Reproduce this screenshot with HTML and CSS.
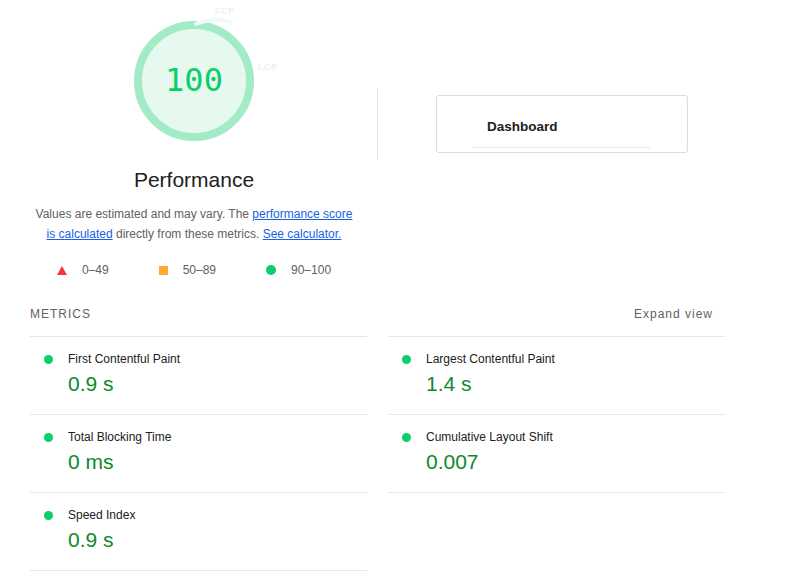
FILE: index.html
```html
<!DOCTYPE html>
<html>
<head>
<meta charset="utf-8">
<link rel="stylesheet" href="styles.css">
</head>
<body>
<div class="page">
  <section class="top">
    <div class="score-col">
      <div class="gauge-wrap">
        <div class="gauge">100</div>
        <svg class="gauge-arc" width="40" height="14" viewBox="0 0 40 14"><path d="M2 10 Q18 3 36 8" fill="none" stroke="#f2faf6" stroke-width="4" stroke-linecap="round"/></svg>
        <span class="ghost ghost-fcp">FCP</span>
        <span class="ghost ghost-lcp">LCP</span>
      </div>
      <h1 class="score-title">Performance</h1>
      <p class="desc">Values are estimated and may vary. The <a href="#">performance score is calculated</a> directly from these metrics. <a href="#">See calculator.</a></p>
      <div class="legend">
        <span class="legend-item"><span class="ico tri"></span>0–49</span>
        <span class="legend-item"><span class="ico sq"></span>50–89</span>
        <span class="legend-item"><span class="ico dot"></span>90–100</span>
      </div>
    </div>
    <div class="divider"></div>
    <div class="card">
      <div class="card-title">Dashboard</div>
      <div class="card-line"></div>
    </div>
  </section>

  <section class="metrics">
    <div class="metrics-head">
      <span class="metrics-label">METRICS</span>
      <span class="metrics-toggle">Expand view</span>
    </div>
    <div class="metrics-grid">
      <div class="metric"><span class="mdot"></span><div><div class="mtitle">First Contentful Paint</div><div class="mval">0.9 s</div></div></div>
      <div class="metric"><span class="mdot"></span><div><div class="mtitle">Largest Contentful Paint</div><div class="mval">1.4 s</div></div></div>
      <div class="metric"><span class="mdot"></span><div><div class="mtitle">Total Blocking Time</div><div class="mval">0 ms</div></div></div>
      <div class="metric"><span class="mdot"></span><div><div class="mtitle">Cumulative Layout Shift</div><div class="mval">0.007</div></div></div>
      <div class="metric"><span class="mdot"></span><div><div class="mtitle">Speed Index</div><div class="mval">0.9 s</div></div></div>
    </div>
  </section>
</div>
</body>
</html>
```

FILE: styles.css
```css
* { box-sizing: border-box; }
html, body { margin: 0; padding: 0; background: #fff; }
body {
  font-family: "Liberation Sans", Arial, sans-serif;
  color: #212121;
  width: 796px;
  height: 571px;
  overflow: hidden;
}
.page { padding: 0 30px; }

.top { display: flex; align-items: flex-start; }
.score-col {
  width: 328px;
  display: flex;
  flex-direction: column;
  align-items: center;
}
.gauge-wrap {
  position: relative;
  width: 120px;
  height: 120px;
  margin-top: 21px;
}
.gauge {
  width: 120px;
  height: 120px;
  border-radius: 50%;
  border: 8px solid #a2ebc6;
  background: #e6f9ef;
  display: flex;
  align-items: center;
  justify-content: center;
  font-family: "DejaVu Sans Mono", monospace;
  font-size: 32px;
  color: #0cce6b;
  padding-bottom: 3px;
}
.gauge-arc { position: absolute; left: 60px; top: -7px; }
.ghost {
  position: absolute;
  font-size: 9px;
  font-weight: bold;
  color: #eeeeee;
  letter-spacing: 0.5px;
}
.ghost-fcp { left: 81px; top: -15px; }
.ghost-lcp { left: 124px; top: 41px; }

.score-title {
  margin: 27px 0 0;
  font-size: 21px;
  font-weight: normal;
  line-height: 24px;
  color: #212121;
}
.desc {
  margin: 12px 0 0;
  width: 322px;
  font-size: 12px;
  line-height: 20px;
  text-align: center;
  color: #616161;
}
.desc a { color: #1a5fe8; text-decoration: underline; }

.legend {
  margin-top: 16px;
  display: flex;
  gap: 50px;
  font-size: 12px;
  line-height: 20px;
  color: #616161;
}
.legend-item { display: flex; align-items: center; gap: 15px; }
.ico { display: inline-block; }
.tri {
  width: 0; height: 0;
  border-left: 5px solid transparent;
  border-right: 5px solid transparent;
  border-bottom: 9px solid #ff3333;
}
.sq { width: 9px; height: 9px; background: #ffaa33; }
.dot { width: 10px; height: 10px; border-radius: 50%; background: #0cce6b; }

.divider {
  width: 1px;
  height: 72px;
  background: #e0e0e0;
  margin: 88px 0 0 19px;
}
.card {
  margin: 95px 0 0 58px;
  width: 252px;
  height: 58px;
  border: 1px solid #dcdcdc;
  border-radius: 3px;
  padding: 22px 0 0 50px;
}
.card-title {
  font-size: 13.5px;
  font-weight: bold;
  line-height: 17px;
  color: #202020;
}
.card-line {
  margin-top: 12px;
  width: 177px;
  height: 1px;
  background: #e6e6e6;
  position: relative;
  left: -14px;
}

.metrics { margin-top: 24px; width: 695px; }
.metrics-head {
  display: flex;
  justify-content: space-between;
  padding-right: 12px;
  font-size: 12px;
  line-height: 20px;
  letter-spacing: 1px;
  color: #616161;
  margin-bottom: 12px;
}
.metrics-grid {
  display: grid;
  grid-template-columns: 337px 337px;
  column-gap: 21px;
}
.metric {
  display: flex;
  gap: 15px;
  padding: 12px 0 0 14px;
  height: 78px;
  border-bottom: 1px solid #e6e6e6;
}
.metric:nth-child(-n+2) { border-top: 1px solid #e6e6e6; height: 79px; }
.mdot {
  flex: none;
  width: 9px;
  height: 9px;
  border-radius: 50%;
  background: #0cce6b;
  margin-top: 6px;
}
.mtitle { font-size: 12px; line-height: 20px; color: #212121; }
.mval { font-size: 21px; line-height: 28px; margin-top: 1px; color: #0b8a2c; }
```
